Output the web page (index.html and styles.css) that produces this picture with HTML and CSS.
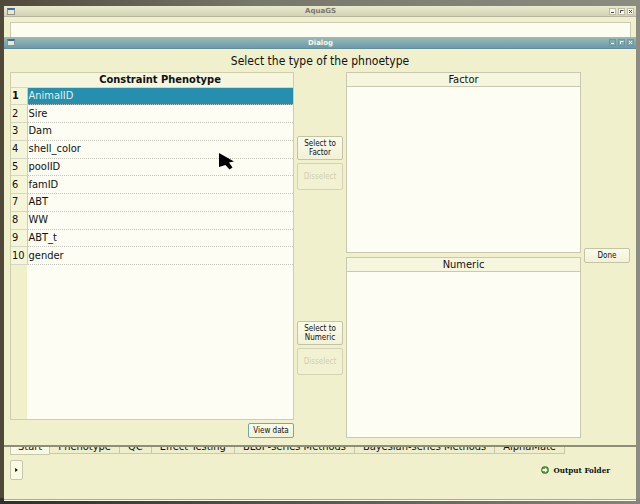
FILE: index.html
```html
<!DOCTYPE html>
<html lang="en">
<head>
<meta charset="utf-8">
<title>AquaGS</title>
<link rel="stylesheet" href="styles.css">
</head>
<body>
<main class="window">
  <header class="titlebar">
    <span class="app-icon"></span>
    <span class="caption">AquaGS</span>
    <div class="controls">
      <button aria-label="Minimize"><svg viewBox="0 0 7 7"><path d="M2 4.500h3"/></svg></button>
      <button aria-label="Maximize"><svg viewBox="0 0 7 7"><path d="M2.500 5V2.500h3"/></svg></button>
      <button aria-label="Close"><svg viewBox="0 0 7 7"><path d="M2 2l3 3M5 2L2 5"/></svg></button>
    </div>
  </header>
  <div class="page"></div>
  <nav class="tabs">
    <button class="tab active">Start</button>
    <button class="tab">Phenotype</button>
    <button class="tab">QC</button>
    <button class="tab">Effect Testing</button>
    <button class="tab">BLUP-series Methods</button>
    <button class="tab">Bayesian-series Methods</button>
    <button class="tab">AlphaMate</button>
  </nav>
  <footer class="footer">
    <button class="expand" aria-label="Expand"><svg viewBox="0 0 4 6"><path d="M0 0l4 3-4 3z"/></svg></button>
    <a class="output" href="#">
      <svg viewBox="0 0 16 16"><circle cx="8" cy="8" r="7.500" fill="#2f701b"/><circle cx="8" cy="8" r="5.500" fill="#69ab3b"/><path d="M3 6h5V3l5 5-5 5v-3H3z" fill="#fff"/></svg>
      Output Folder
    </a>
  </footer>
</main>

<section class="dialog" role="dialog" aria-label="Dialog">
  <header class="titlebar">
    <span class="app-icon"></span>
    <span class="caption">Dialog</span>
    <div class="controls">
      <button aria-label="Minimize"><svg viewBox="0 0 7 7"><path d="M2 4.500h3"/></svg></button>
      <button aria-label="Maximize"><svg viewBox="0 0 7 7"><path d="M2.500 5V2.500h3"/></svg></button>
      <button aria-label="Close"><svg viewBox="0 0 7 7"><path d="M2 2l3 3M5 2L2 5"/></svg></button>
    </div>
  </header>
  <h1 class="heading">Select the type of the phnoetype</h1>
  <div class="columns">
    <div class="source">
      <div class="list">
        <table class="phenotypes">
          <thead><tr><th></th><th>Constraint Phenotype</th></tr></thead>
          <tbody>
            <tr class="selected"><th>1</th><td>AnimalID</td></tr>
            <tr><th>2</th><td>Sire</td></tr>
            <tr><th>3</th><td>Dam</td></tr>
            <tr><th>4</th><td>shell_color</td></tr>
            <tr><th>5</th><td>poolID</td></tr>
            <tr><th>6</th><td>famID</td></tr>
            <tr><th>7</th><td>ABT</td></tr>
            <tr><th>8</th><td>WW</td></tr>
            <tr><th>9</th><td>ABT_t</td></tr>
            <tr><th>10</th><td>gender</td></tr>
          </tbody>
        </table>
        <div class="rest"></div>
      </div>
      <button class="btn focus">View data</button>
    </div>
    <div class="halves">
      <div class="actions">
        <button class="btn tall">Select to<br>Factor</button>
        <button class="btn off" disabled>Disselect</button>
      </div>
      <div class="actions">
        <button class="btn tall">Select to<br>Numeric</button>
        <button class="btn off" disabled>Disselect</button>
      </div>
    </div>
    <div class="halves">
      <div class="target"><h2>Factor</h2></div>
      <div class="target"><h2>Numeric</h2></div>
    </div>
    <button class="btn done">Done</button>
  </div>
</section>

<svg class="cursor" viewBox="0 0 15 18"><path d="M0 0l15 8.500-5 1 3.500 5-3 2-4-4.500L0 14z"/></svg>
</body>
</html>
```
FILE: styles.css
```css
* {
  box-sizing: border-box;
}

body {
  margin: 0;
  min-height: 100vh;
  padding: 6px 4px 3px;
  display: flex;
  background:
    linear-gradient(90deg, #30302a, #50504c 40%, #85857c) bottom / 100% 6px no-repeat,
    linear-gradient(90deg, #50493a, #77776a 40%, #8c8c80);
  font-family: "DejaVu Sans Condensed", "DejaVu Sans", sans-serif;
  font-size: 11px;
  color: #111;
}

button {
  margin: 0;
  padding: 0;
  font: inherit;
  color: inherit;
}

.window {
  flex: 1;
  display: flex;
  flex-direction: column;
  background: #f0f0cd;
  border-bottom: 1px solid #fafaf0;
}

.titlebar {
  display: grid;
  grid-template-columns: 1fr auto 1fr;
  align-items: center;
  height: 11px;
  padding: 0 2px 0 3px;
  background: linear-gradient(#eaeacc, #d2d2b6);
  border-bottom: 1px solid #b4b4a0;
  font: bold 7px "DejaVu Sans", sans-serif;
  color: #77776a;
}

.app-icon {
  width: 8px;
  height: 7px;
  background: #e8e8d8;
  border: 1px solid #8a958e;
  border-top: 2px solid #3f6ca4;
}

.controls {
  display: flex;
  justify-content: flex-end;
  gap: 2px;
}

.controls button {
  width: 7px;
  height: 7px;
  border: 0;
  background: #f8f8e4;
  outline: 1px solid #bcbca8;
  outline-offset: -1px;
  color: #444;
}

.controls svg {
  display: block;
  fill: none;
  stroke: currentColor;
}

.page {
  flex: 1;
  margin: 5px 5px 0 6px;
  background: #fcfcf0;
  border: 1px solid #cbcbb4;
}

.tabs {
  display: flex;
  align-items: flex-start;
  padding-left: 6px;
}

.tab {
  height: 16px;
  padding: 0 8px;
  border: 1px solid #c8c8ac;
  border-left-width: 0;
  background: #eeeeca;
  line-height: 11px;
  white-space: nowrap;
}

.tab.active {
  height: 17px;
  padding: 0 7px;
  border-left-width: 1px;
  background: #f9f9e4;
}

.footer {
  display: flex;
  justify-content: space-between;
  align-items: center;
  height: 45px;
  padding: 0 26px 14px 6px;
  border-bottom: 1px solid #aaaa90;
}

.expand {
  display: grid;
  place-items: center;
  width: 13px;
  height: 20px;
  background: #fafae2;
  border: 1px solid #c6c6ae;
  border-radius: 2px;
}

.expand svg {
  width: 3px;
  height: 4px;
}

.output {
  display: flex;
  align-items: center;
  gap: 4px;
  font: bold 8px "DejaVu Serif Condensed", "DejaVu Serif", serif;
  color: #111;
  text-decoration: none;
}

.output svg {
  width: 8px;
  height: 8px;
}

.dialog {
  position: absolute;
  top: 37px;
  left: 4px;
  right: 4px;
  background: #f0f0cd;
  border-bottom: 2px solid #8e8e78;
}

.dialog .titlebar {
  height: 12px;
  background: linear-gradient(#9dbbb5, #6b9aac);
  border-color: #658e98;
  color: #f4f8e8;
}

.dialog .controls button {
  background: #83aaaf;
  outline-color: #6699a2;
  color: #fff;
}

.heading {
  margin: 0;
  font-size: 12px;
  font-weight: normal;
  line-height: 25px;
  height: 23px;
  text-align: center;
}

.columns {
  display: grid;
  grid-template-columns: 284fr 46px 235fr 46px;
  gap: 3px;
  min-height: 366px;
  margin: 0 6px 7px;
}

.source {
  display: flex;
  flex-direction: column;
  align-items: flex-end;
  gap: 3px;
}

.list {
  flex: 1;
  width: 100%;
  display: flex;
  flex-direction: column;
  background: #fdfdf3;
  border: 1px solid #cecead;
}

.phenotypes {
  width: 100%;
  height: 192px;
  border-collapse: collapse;
}

.phenotypes th,
.phenotypes td {
  padding: 0 1px;
  line-height: 14px;
  text-align: left;
  font-weight: normal;
  border-bottom: 1px solid #d6d6c6;
}

.phenotypes td {
  width: 100%;
  border-bottom-style: dotted;
  border-bottom-color: #c4c4b8;
}

.phenotypes tbody th {
  min-width: 16px;
  background: #f5f5d8;
  border-right: 1px solid #cecead;
}

.phenotypes thead th {
  height: 14px;
  padding: 0;
  background: #f6f6de;
  line-height: 13px;
  text-align: center;
  font-weight: bold;
}

.phenotypes .selected th {
  font-weight: bold;
}

.phenotypes .selected td {
  background: #268fb0;
  color: #e2eee0;
}

.rest {
  flex: 1;
  width: 16px;
  background: #f0f0cd;
}

.halves {
  display: grid;
  grid-template-rows: 1fr 1fr;
  gap: 4px;
}

.actions {
  display: flex;
  flex-direction: column;
  justify-content: center;
  gap: 3px;
}

.target {
  background: #fdfdf3;
  border: 1px solid #c9c9b0;
}

.target h2 {
  margin: 0;
  background: #f6f6de;
  border-bottom: 1px solid #c9c9b0;
  font-size: 11px;
  font-weight: normal;
  line-height: 13px;
  text-align: center;
}

.btn {
  width: 46px;
  height: 15px;
  background: linear-gradient(#fafaeb, #f2f2d8);
  border: 1px solid #c3c3a6;
  border-radius: 2px;
  font-size: 8px;
  line-height: 9px;
}

.tall {
  height: 24px;
}

.off {
  height: 27px;
  background: #f2f2d2;
  border-color: #d3d3b4;
  color: #cfcfb2;
}

.focus {
  border-color: #6fa9a8;
}

.done {
  align-self: center;
}

.cursor {
  position: absolute;
  top: 153px;
  left: 219px;
  width: 15px;
  height: 18px;
}
```
